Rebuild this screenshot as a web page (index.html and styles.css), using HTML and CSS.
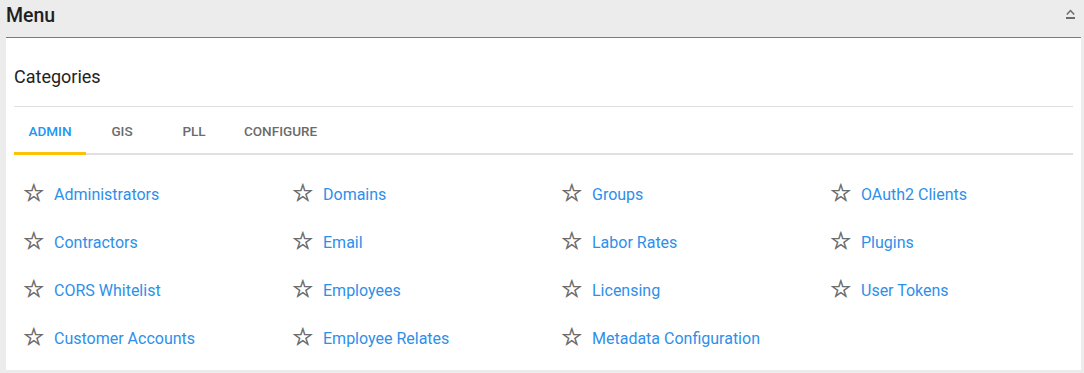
FILE: index.html
```html
<!DOCTYPE html>
<html lang="en">
<head>
    <meta charset="UTF-8">
    <title>Menu</title>
    <link rel="stylesheet" href="styles.css">
</head>
<body>
    <div class="panel">
        <!-- Panel header -->
        <div class="panel-header">
            <h1>Menu</h1>
            <button class="collapse-btn" type="button">
                <svg width="11" height="12" viewBox="0 0 11 12">
                    <path d="M1.8 6.5 L5.5 2.6 L9.2 6.5" fill="none" stroke="#6b6b6b" stroke-width="1.5"/>
                    <rect x="1" y="9" width="9" height="2" fill="#6b6b6b"/>
                </svg>
            </button>
        </div>

        <div class="panel-body">
            <h2>Categories</h2>

            <div class="tabs">
                <a class="tab active">ADMIN</a>
                <a class="tab">GIS</a>
                <a class="tab">PLL</a>
                <a class="tab">CONFIGURE</a>
            </div>

            <!-- Admin links -->
            <ul class="links">
                <li><span class="star">&#9734;</span><a>Administrators</a></li>
                <li><span class="star">&#9734;</span><a>Domains</a></li>
                <li><span class="star">&#9734;</span><a>Groups</a></li>
                <li><span class="star">&#9734;</span><a>OAuth2 Clients</a></li>
                <li><span class="star">&#9734;</span><a>Contractors</a></li>
                <li><span class="star">&#9734;</span><a>Email</a></li>
                <li><span class="star">&#9734;</span><a>Labor Rates</a></li>
                <li><span class="star">&#9734;</span><a>Plugins</a></li>
                <li><span class="star">&#9734;</span><a>CORS Whitelist</a></li>
                <li><span class="star">&#9734;</span><a>Employees</a></li>
                <li><span class="star">&#9734;</span><a>Licensing</a></li>
                <li><span class="star">&#9734;</span><a>User Tokens</a></li>
                <li><span class="star">&#9734;</span><a>Customer Accounts</a></li>
                <li><span class="star">&#9734;</span><a>Employee Relates</a></li>
                <li><span class="star">&#9734;</span><a>Metadata Configuration</a></li>
            </ul>
        </div>
    </div>
</body>
</html>
```

FILE: styles.css
```css
html, body {
    margin: 0;
    background: #ececec;
    font-family: Roboto, "Noto Sans", Arial, sans-serif;
}
.panel {
    margin: 0 3px 0 6px;
}
.panel-header {
    display: flex;
    align-items: center;
    justify-content: space-between;
    height: 37px;
    border-bottom: 1px solid #2f8ee0;
}
.panel-header h1 {
    margin: 0;
    margin-top: -6px;
    font-size: 19.5px;
    font-weight: 500;
    color: #1f1f1f;
}
.collapse-btn {
    border: none;
    background: none;
    padding: 0;
    margin: -9px 5px 0 0;
    width: 11px;
    height: 12px;
    display: flex;
}
.panel-body {
    background: #fff;
    padding: 28px 8px 8px 8px;
}
.panel-body h2 {
    margin: 0;
    font-size: 18px;
    font-weight: 400;
    color: #222;
    line-height: 22px;
    padding-bottom: 18px;
    border-bottom: 1px solid #e0e0e0;
}
.tabs {
    display: flex;
    border-bottom: 2px solid #e0e0e0;
}
.tab {
    min-width: 72px;
    box-sizing: border-box;
    padding: 16px 14px 13px;
    text-align: center;
    font-size: 13.5px;
    font-weight: 500;
    color: #6b6b6b;
    margin-bottom: -2px;
    border-bottom: 3px solid transparent;
}
.tab.active {
    color: #2196f3;
    border-bottom-color: #ffc107;
}
.links {
    list-style: none;
    margin: 0;
    padding: 15px 0 0 9px;
    display: grid;
    grid-template-columns: repeat(4, 269px);
}
.links li {
    display: flex;
    align-items: center;
    height: 48px;
}
.star {
    width: 31px;
    font-size: 24px;
    color: #6d6d6d;
    font-family: "DejaVu Sans", sans-serif;
    line-height: 1;
    margin-top: -2px;
    -webkit-text-stroke: 0.6px #6d6d6d;
}
.links a {
    font-size: 16px;
    color: #2e8fea;
}
```
